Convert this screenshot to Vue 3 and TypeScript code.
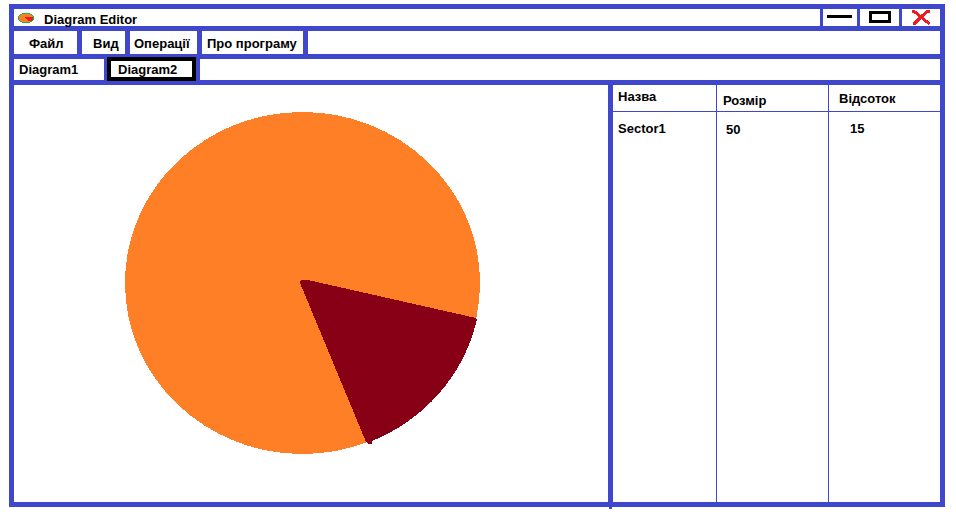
<script setup lang="ts">
import { ref } from 'vue'

interface Sector {
  name: string
  size: number
  percent: number
}

const menus = [
  { label: 'Файл', kind: 'file' },
  { label: 'Вид', kind: 'view' },
  { label: 'Операції', kind: 'operations' },
  { label: 'Про програму', kind: 'about' },
]
const tabs = ['Diagram1', 'Diagram2']
const activeTab = ref('Diagram2')
const sectors: Sector[] = [{ name: 'Sector1', size: 50, percent: 15 }]
</script>

<template>
  <div class="page">
    <div class="window">
      <header class="titlebar">
        <svg class="logo" width="16" height="12" viewBox="0 0 16 12" shape-rendering="crispEdges" aria-hidden="true">
          <ellipse cx="8" cy="6" rx="8" ry="5.5" fill="#22b14c" />
          <ellipse cx="8" cy="6" rx="7" ry="4.5" fill="#ff7f27" />
          <path d="M7 5H15V7L13 9H10L9 7L7 6Z" fill="#ed1c24" />
        </svg>
        <h1 class="title">Diagram Editor</h1>
        <div class="controls">
          <button class="control minimize" type="button" aria-label="Minimize">
            <svg width="25" height="15" viewBox="0 0 25 15"><path d="M0 6.5H25" stroke="#000" stroke-width="3" /></svg>
          </button>
          <button class="control maximize" type="button" aria-label="Maximize">
            <svg width="22" height="15" viewBox="0 0 22 15">
              <rect x="1.5" y="2.5" width="19" height="9" fill="none" stroke="#000" stroke-width="3" />
            </svg>
          </button>
          <button class="control close" type="button" aria-label="Close">
            <svg width="18" height="15" viewBox="0 0 18 15" shape-rendering="crispEdges">
              <path d="M1.5 1.5L4 2.5L9 7L13 10.5L16.5 13M16.5 1.5H15L10 6L6 10L2.5 13.5" fill="none" stroke="#ed1c24" stroke-width="3" stroke-linecap="round" stroke-linejoin="round" />
            </svg>
          </button>
        </div>
      </header>

      <nav class="menubar">
        <button v-for="menu in menus" :key="menu.kind" type="button" class="menu" :class="menu.kind">
          {{ menu.label }}
        </button>
      </nav>

      <div class="tabs" role="tablist">
        <button
          v-for="tab in tabs"
          :key="tab"
          type="button"
          role="tab"
          class="tab"
          :class="{ active: tab === activeTab }"
          :aria-selected="tab === activeTab"
          @click="activeTab = tab"
        >
          {{ tab }}
        </button>
        <div class="tab-space"></div>
      </div>

      <main class="workspace">
        <section class="canvas">
          <svg class="chart" width="355" height="342" viewBox="0 0 355 342" shape-rendering="crispEdges" aria-hidden="true">
            <ellipse cx="177.5" cy="171" rx="177.5" ry="171" fill="#ff7f27" />
            <path
              d="M175 169L177 168H183L351 206L352 208L351 211A178 171.5 0 0 1 247 329V331L246 332H243L241 330L175 171Z"
              fill="#880015"
            />
          </svg>
        </section>
        <aside class="panel">
          <table class="data">
            <thead>
              <tr>
                <th class="name" scope="col">Назва</th>
                <th class="size" scope="col">Розмір</th>
                <th class="percent" scope="col">Відсоток</th>
              </tr>
            </thead>
            <tbody>
              <tr v-for="sector in sectors" :key="sector.name">
                <td class="name">{{ sector.name }}</td>
                <td class="size">{{ sector.size }}</td>
                <td class="percent">{{ sector.percent }}</td>
              </tr>
            </tbody>
          </table>
        </aside>
      </main>
    </div>
  </div>
</template>

<style>
body {
  background: #fff;
}
</style>

<style scoped>
.page {
  --line: #3f48cc;
  box-sizing: border-box;
  height: 100vh;
  padding: 4px 11px 7px 9px;
  color: #000;
  font: bold 13px/16px "Liberation Sans", Arial, sans-serif;
}

.window {
  box-sizing: border-box;
  display: flex;
  flex-direction: column;
  height: 100%;
  border: 5px solid var(--line);
}

button {
  box-sizing: border-box;
  margin: 0;
  padding: 0;
  border: 0;
  border-radius: 0;
  background: #fff;
  color: inherit;
  font: inherit;
  text-align: left;
  white-space: nowrap;
}

.titlebar {
  display: flex;
  align-items: center;
  height: 17px;
  padding-left: 4px;
  border-bottom: 5px solid var(--line);
}

.logo {
  flex: none;
}

.title {
  margin: 0 0 0 10px;
  padding-top: 4px;
  font: inherit;
}

.controls {
  display: flex;
  align-self: stretch;
  margin-left: auto;
}

.control {
  display: flex;
  align-items: center;
  justify-content: center;
  border-left: 3px solid var(--line);
}

.minimize {
  width: 37px;
  padding-right: 1px;
}

.maximize {
  width: 42px;
}

.close {
  width: 41px;
}

.menubar {
  display: flex;
  height: 23px;
  border-bottom: 5px solid var(--line);
}

.menu {
  padding-top: 2px;
  border-right: 5px solid var(--line);
}

.file {
  width: 68px;
  padding-left: 15px;
}

.view {
  width: 48px;
  padding-left: 11px;
}

.operations {
  width: 72px;
  padding-left: 4px;
}

.about {
  width: 106px;
  padding-left: 5px;
}

.tabs {
  display: flex;
  height: 21px;
  border-bottom: 5px solid var(--line);
}

.tab {
  width: 93px;
  padding-left: 5px;
  border-right: 3px solid var(--line);
}

.tab.active {
  width: 89px;
  height: 24px;
  margin-top: -2px;
  padding-top: 1px;
  padding-left: 7px;
  border: 4px solid #000;
}

.tab-space {
  flex: 1;
  border-left: 4px solid var(--line);
}

.workspace {
  display: flex;
  flex: 1;
  min-height: 0;
}

.canvas {
  display: flex;
  flex: 1;
  align-items: center;
  justify-content: center;
  min-width: 0;
  padding: 0 17px 21px 0;
}

.chart {
  max-width: 100%;
}

.panel {
  position: relative;
  box-sizing: border-box;
  width: 332px;
  border-left: 5px solid var(--line);
}

.panel::after {
  position: absolute;
  bottom: -7px;
  left: -4px;
  width: 3px;
  height: 2px;
  background: var(--line);
  content: "";
}

.data {
  width: 100%;
  height: 100%;
  border-spacing: 0;
  table-layout: fixed;
}

th,
td {
  box-sizing: border-box;
  padding: 9px 0 0 5px;
  border-right: 1px solid var(--line);
  text-align: left;
  vertical-align: top;
}

th {
  height: 27px;
  padding-top: 4px;
  border-bottom: 1px solid var(--line);
}

th.name {
  width: 104px;
}

th.size {
  width: 112px;
  padding-top: 8px;
  padding-left: 6px;
}

th.percent {
  padding-top: 6px;
  padding-left: 10px;
}

td.size {
  padding-top: 10px;
  padding-left: 9px;
}

td.percent {
  padding-left: 21px;
}

.percent {
  border-right: 0;
}
</style>
